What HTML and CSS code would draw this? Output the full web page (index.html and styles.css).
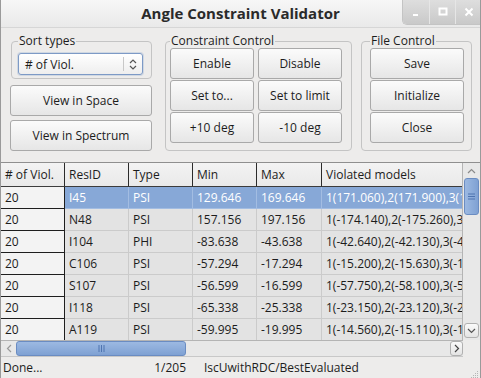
FILE: index.html
```html
<!DOCTYPE html>
<html lang="en">
<head>
  <meta charset="UTF-8">
  <title>Angle Constraint Validator</title>
  <link rel="stylesheet" href="styles.css">
</head>
<body>
  <div class="window">
    <div class="titlebar">
      <span></span>
      <span class="title">Angle Constraint Validator</span>
      <div class="wm-buttons">
        <span class="wm-btn"><svg width="10" height="10" viewBox="0 0 10 10"><rect x="2" y="7" width="5" height="2" fill="#fff"/></svg></span>
        <span class="wm-btn"><svg width="10" height="10" viewBox="0 0 10 10"><rect x="1.5" y="1.5" width="7" height="6" fill="none" stroke="#fff" stroke-width="2"/></svg></span>
        <span class="wm-btn"><svg width="10" height="10" viewBox="0 0 10 10"><path d="M1.5 1.5 L8.5 8.5 M8.5 1.5 L1.5 8.5" stroke="#fff" stroke-width="2"/></svg></span>
      </div>
    </div>

    <div class="controls">
      <div class="left-col">
        <fieldset class="group sort-group">
          <legend>Sort types</legend>
          <div class="combo">
            <span class="combo-text"># of Viol.</span>
            <span class="combo-arrows">
              <svg width="8" height="11" viewBox="0 0 8 11"><path d="M1 4 L4 1 L7 4 M1 7 L4 10 L7 7" fill="none" stroke="#555" stroke-width="1.2"/></svg>
            </span>
          </div>
        </fieldset>
        <button class="btn">View in Space</button>
        <button class="btn">View in Spectrum</button>
      </div>

      <fieldset class="group constraint-group">
        <legend>Constraint Control</legend>
        <div class="btn-grid">
          <button class="btn">Enable</button>
          <button class="btn">Disable</button>
          <button class="btn">Set to...</button>
          <button class="btn">Set to limit</button>
          <button class="btn">+10 deg</button>
          <button class="btn">-10 deg</button>
        </div>
      </fieldset>

      <fieldset class="group file-group">
        <legend>File Control</legend>
        <div class="btn-stack">
          <button class="btn">Save</button>
          <button class="btn">Initialize</button>
          <button class="btn">Close</button>
        </div>
      </fieldset>
    </div>

    <div class="table-frame">
      <div class="table-main">
        <div class="table-clip">
          <table class="grid">
            <colgroup>
              <col class="c-viol"><col class="c-std"><col class="c-std"><col class="c-std"><col class="c-max"><col class="c-models">
            </colgroup>
            <thead>
              <tr><th># of Viol.</th><th>ResID</th><th>Type</th><th>Min</th><th>Max</th><th>Violated models</th></tr>
            </thead>
            <tbody>
              <tr class="selected"><td>20</td><td>I45</td><td>PSI</td><td>129.646</td><td>169.646</td><td>1(171.060),2(171.900),3(170.380)</td></tr>
              <tr><td>20</td><td>N48</td><td>PSI</td><td>157.156</td><td>197.156</td><td>1(-174.140),2(-175.260),3(-173.900)</td></tr>
              <tr><td>20</td><td>I104</td><td>PHI</td><td>-83.638</td><td>-43.638</td><td>1(-42.640),2(-42.130),3(-41.870)</td></tr>
              <tr><td>20</td><td>C106</td><td>PSI</td><td>-57.294</td><td>-17.294</td><td>1(-15.200),2(-15.630),3(-16.020)</td></tr>
              <tr><td>20</td><td>S107</td><td>PSI</td><td>-56.599</td><td>-16.599</td><td>1(-57.750),2(-58.100),3(-57.420)</td></tr>
              <tr><td>20</td><td>I118</td><td>PSI</td><td>-65.338</td><td>-25.338</td><td>1(-23.150),2(-23.120),3(-22.980)</td></tr>
              <tr><td>20</td><td>A119</td><td>PSI</td><td>-59.995</td><td>-19.995</td><td>1(-14.560),2(-15.110),3(-14.900)</td></tr>
            </tbody>
          </table>
        </div>
        <div class="vscroll">
          <span class="sb-arrow"><svg width="9" height="6" viewBox="0 0 9 6"><path d="M1 5 L4.5 1.5 L8 5" fill="none" stroke="#8a8a8a" stroke-width="1.2"/></svg></span>
          <span class="vhandle"><svg width="7" height="7" viewBox="0 0 7 7"><path d="M0 1 H7 M0 3.5 H7 M0 6 H7" stroke="#4f74b0" stroke-width="1"/></svg></span>
          <span class="sb-fill"></span>
          <span class="sb-arrow boxed"><svg width="9" height="6" viewBox="0 0 9 6"><path d="M1 1 L4.5 4.5 L8 1" fill="none" stroke="#555" stroke-width="1.2"/></svg></span>
        </div>
      </div>
      <div class="hscroll-row">
        <div class="hscroll">
          <span class="sb-arrow h"><svg width="6" height="9" viewBox="0 0 6 9"><path d="M5 1 L1.5 4.5 L5 8" fill="none" stroke="#9a9a9a" stroke-width="1.2"/></svg></span>
          <span class="hhandle"><svg width="7" height="7" viewBox="0 0 7 7"><path d="M1 0 V7 M3.5 0 V7 M6 0 V7" stroke="#4f74b0" stroke-width="1"/></svg></span>
          <span class="sb-fill"></span>
          <span class="sb-arrow h boxed"><svg width="6" height="9" viewBox="0 0 6 9"><path d="M1 1 L4.5 4.5 L1 8" fill="none" stroke="#444" stroke-width="1.2"/></svg></span>
        </div>
        <div class="corner"></div>
      </div>
    </div>

    <div class="statusbar">
      <span class="status-msg">Done...</span>
      <span class="status-count">1/205</span>
      <span class="status-path">IscUwithRDC/BestEvaluated</span>
      <span class="grip"><svg width="10" height="10" viewBox="0 0 10 10"><g fill="#b5b5b5"><rect x="8" y="2" width="1" height="1"/><rect x="6" y="4" width="1" height="1"/><rect x="8" y="4" width="1" height="1"/><rect x="4" y="6" width="1" height="1"/><rect x="6" y="6" width="1" height="1"/><rect x="8" y="6" width="1" height="1"/><rect x="2" y="8" width="1" height="1"/><rect x="4" y="8" width="1" height="1"/><rect x="6" y="8" width="1" height="1"/><rect x="8" y="8" width="1" height="1"/></g></svg></span>
    </div>
  </div>
</body>
</html>
```

FILE: styles.css
```css
* {
  box-sizing: border-box;
}

body {
  margin: 0;
  font-family: "Open Sans", "DejaVu Sans", sans-serif;
  font-size: 12px;
  color: #1c1c1c;
  background: #edeceb;
}

.window {
  width: 481px;
  height: 378px;
  display: flex;
  flex-direction: column;
  background: #edeceb;
  border-left: 1px solid #9a9a9a;
  border-right: 1px solid #9a9a9a;
  overflow: hidden;
}

/* === Title bar === */
.titlebar {
  height: 28px;
  flex: none;
  display: grid;
  grid-template-columns: 1fr auto 1fr;
  background: linear-gradient(#f7f7f7, #e9e9e9);
  border-bottom: 1px solid #d6d6d6;
}

.title {
  font-weight: 700;
  font-size: 15px;
  color: #2a2a2a;
  line-height: 27px;
}

.wm-buttons {
  justify-self: end;
  align-self: start;
  display: flex;
  height: 25px;
  margin-right: -1px;
  border-bottom-left-radius: 5px;
  overflow: hidden;
  border-left: 1px solid #c4c4c4;
  border-bottom: 1px solid #c4c4c4;
}

.wm-btn {
  width: 26px;
  height: 24px;
  display: flex;
  align-items: center;
  justify-content: center;
  background: linear-gradient(#dedede, #c9c9c9);
  border-left: 1px solid #e6e6e6;
}

.wm-btn:first-child {
  border-left: none;
}

/* === Controls === */
.controls {
  display: flex;
  align-items: flex-start;
  padding: 6px 0 0 9px;
  height: 134px;
  flex: none;
}

.left-col {
  width: 142px;
  display: flex;
  flex-direction: column;
  gap: 4px;
}

.group {
  margin: 0;
  padding: 0;
  border: 1px solid #c4c4c4;
  border-radius: 4px;
}

.group legend {
  padding: 0 1px;
  line-height: 14px;
}

.sort-group {
  margin-left: 1px;
  padding: 5px 8px 3px 6px;
  margin-bottom: 2px;
}

.combo {
  height: 22px;
  display: flex;
  align-items: center;
  border: 1px solid #7d9ac6;
  border-radius: 3px;
  background: linear-gradient(#ffffff, #eeeeee);
  box-shadow: 0 0 0 1px rgba(125, 154, 198, 0.25);
}

.combo-text {
  flex: 1;
  padding-left: 6px;
}

.combo-arrows {
  width: 19px;
  height: 14px;
  display: flex;
  align-items: center;
  justify-content: center;
  border-left: 1px solid #c8c8c8;
}

.btn {
  height: 31px;
  padding: 0;
  font-family: inherit;
  font-size: 12px;
  color: #1c1c1c;
  background: linear-gradient(#fbfbfb, #e6e6e6);
  border: 1px solid #a9a9a9;
  border-radius: 3px;
  -webkit-appearance: none;
  appearance: none;
}

.constraint-group {
  width: 187px;
  margin-left: 13px;
  padding: 0 9px 7px 4px;
}

.btn-grid {
  display: grid;
  grid-template-columns: 1fr 1fr;
  column-gap: 4px;
  row-gap: 1px;
}

.file-group {
  width: 111px;
  margin-left: 9px;
  padding: 0 7px 7px 8px;
}

.btn-stack {
  display: flex;
  flex-direction: column;
  gap: 1px;
}

/* === Table === */
.table-frame {
  height: 195px;
  flex: none;
  display: flex;
  flex-direction: column;
  border-top: 1px solid #8f8f8f;
}

.table-main {
  flex: 1;
  display: flex;
  min-height: 0;
}

.table-clip {
  width: 462px;
  overflow: hidden;
}

.grid {
  table-layout: fixed;
  border-collapse: separate;
  border-spacing: 0;
  width: 563px;
}

.c-viol, .c-std { width: 64px; }
.c-max { width: 65px; }
.c-models { width: 242px; }

.grid th,
.grid td {
  padding: 0 4px;
  text-align: left;
  font-weight: 400;
  white-space: nowrap;
  overflow: hidden;
  box-sizing: border-box;
}

.grid th {
  height: 24px;
  background: linear-gradient(#f3f3f3, #e9e9e9);
  border-right: 1px solid #2b2b2b;
  border-bottom: 1px solid #3c3c3c;
}

.grid td {
  height: 22px;
  background: #e3e3e3;
  border-right: 1px solid #cbcbcb;
  border-bottom: 1px solid #cbcbcb;
}

.grid td:first-child {
  background: #f3f3f3;
  border-right: 1px solid #1e1e1e;
  border-bottom: 1px solid #1e1e1e;
}

.grid tr.selected td:not(:first-child) {
  background: #87a8d7;
  color: #fff;
  border-right-color: #a3bde2;
  border-bottom-color: #a3bde2;
}

.vscroll {
  width: 18px;
  display: flex;
  flex-direction: column;
  align-items: center;
  background: #e8e8e8;
  border-left: 1px solid #b4b4b4;
}

.sb-arrow {
  width: 15px;
  height: 15px;
  flex: none;
  display: flex;
  align-items: center;
  justify-content: center;
}

.sb-arrow.boxed {
  background: linear-gradient(#fafafa, #e4e4e4);
  border: 1px solid #b0b0b0;
  border-radius: 3px;
  margin-bottom: 2px;
}

.vhandle {
  width: 15px;
  height: 37px;
  flex: none;
  display: flex;
  align-items: center;
  justify-content: center;
  background: linear-gradient(90deg, #9cb9e2, #7fa1d3);
  border: 1px solid #6a8cc2;
  border-radius: 3px;
}

.sb-fill {
  flex: 1;
}

.hscroll-row {
  height: 17px;
  flex: none;
  display: flex;
}

.hscroll {
  width: 462px;
  display: flex;
  align-items: center;
  background: #e8e8e8;
  border-top: 1px solid #b4b4b4;
  border-bottom: 1px solid #c8c8c8;
}

.sb-arrow.h {
  width: 15px;
  height: 15px;
}

.sb-arrow.h.boxed {
  width: 13px;
  margin: 0;
}

.hhandle {
  width: 170px;
  height: 15px;
  flex: none;
  display: flex;
  align-items: center;
  justify-content: center;
  background: linear-gradient(#9cb9e2, #7fa1d3);
  border: 1px solid #6a8cc2;
  border-radius: 3px;
}

.corner {
  flex: 1;
  background: #edeceb;
}

/* === Status bar === */
.statusbar {
  flex: 1;
  display: flex;
  align-items: center;
  padding-left: 2px;
}

.status-msg {
  width: 140px;
}

.status-count {
  width: 43px;
  text-align: right;
}

.status-path {
  flex: 1;
  margin-left: 18px;
}

.grip {
  align-self: flex-end;
  height: 12px;
  margin-right: 1px;
}
```
